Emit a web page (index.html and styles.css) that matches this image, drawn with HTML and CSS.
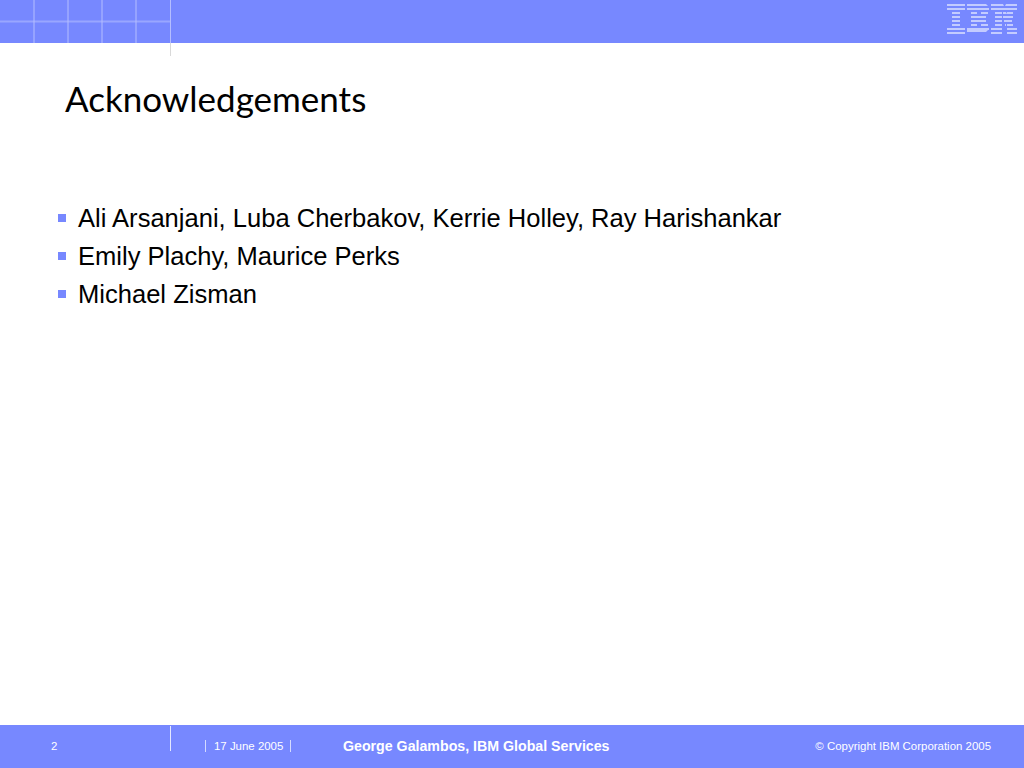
FILE: index.html
```html
<!DOCTYPE html>
<html lang="en">
<head>
<meta charset="utf-8">
<title>Acknowledgements</title>
<link rel="stylesheet" href="styles.css">
</head>
<body>
<div class="slide">
  <header class="top">
    <svg class="grid" width="172" height="56" viewBox="0 0 172 56">
      <path class="soft" d="M0 21.5H171"/>
      <path class="line" d="M34 0V43M68 0V43M102 0V43M136 0V43M170.5 0V43"/>
      <path class="tail" d="M170.5 43V56"/>
    </svg>
    <svg class="logo" width="72" height="34" viewBox="0 0 72 34">
      <path d="M1 3h18v2H1zM1 7h18v2H1zM6 11h8v2H6zM6 15h8v2H6zM6 19h8v2H6zM6 23h8v2H6zM1 27h18v2H1zM1 31h18v2H1z"/>
      <path d="M21 3h19l2 2H21zM21 7h22v2H21zM25 11h6v2h-6zM35 11h7v2h-7zM25 15h15v2H25zM25 19h15v2H25zM25 23h6v2h-6zM35 23h7v2h-7zM21 27h22v2H21zM21 31h19l2-2H21z"/>
      <path d="M45 3h12l1 2H45zM60 3h11v2H59zM45 7h14l1 2H45zM59 7h12v2H60zM49 11h7v2h-7zM57 11h3l1 2h-4zM61 11h6v2h-6zM49 15h7v2h-7zM57 15h10v2H57zM49 19h7v2h-7zM58 19h8v2h-8zM61 23h6v2h-6zM49 23h7v2h-7zM45 27h11v2H45zM59 23h1v2h-1zM61 27h10v2H61zM45 31h11v2H45zM61 31h10v2H61z"/>
    </svg>
  </header>
  <main class="content">
    <h1 class="title">Acknowledgements</h1>
    <ul class="items">
      <li class="item">Ali Arsanjani, Luba Cherbakov, Kerrie Holley, Ray Harishankar</li>
      <li class="item">Emily Plachy, Maurice Perks</li>
      <li class="item">Michael Zisman</li>
    </ul>
  </main>
  <footer class="bottom">
    <span class="page">2</span>
    <span class="divider"></span>
    <span class="date"><i class="bar"></i>17 June 2005<i class="bar"></i></span>
    <span class="author">George Galambos, IBM Global Services</span>
    <span class="copy">© Copyright IBM Corporation 2005</span>
  </footer>
</div>
</body>
</html>
```
FILE: styles.css
```css
html, body { margin: 0; padding: 0; background: #fff; }
.slide {
  width: 1024px;
  height: 768px;
  display: flex;
  flex-direction: column;
  position: relative;
  overflow: hidden;
  font-family: "Liberation Sans", Arial, sans-serif;
}
.top {
  height: 43px;
  flex: none;
  background: #7788ff;
  display: flex;
  justify-content: flex-end;
  align-items: flex-start;
}
.grid { position: absolute; left: 0; top: 0; }
.grid path { fill: none; }
.soft { stroke: #99a6ff; stroke-width: 2; }
.line { stroke: #b5beff; stroke-width: 1; }
.tail { stroke: #d9d9d9; stroke-width: 1; }
.logo { margin: 1px 6px 0 0; fill: #c3cbff; }
.content { flex: 1; padding: 0 0 0 58px; }
.title {
  margin: 34px 0 0 7px;
  font-family: Lato, "DejaVu Sans", sans-serif;
  font-size: 35px;
  line-height: 42px;
  font-weight: 400;
  color: #000;
}
.items { list-style: none; margin: 80px 0 0; padding: 0; }
.item {
  position: relative;
  padding-left: 20px;
  font-size: 25.55px;
  line-height: 38px;
  color: #000;
}
.item::before {
  content: "";
  position: absolute;
  left: 0;
  top: 15px;
  width: 8px;
  height: 8px;
  background: #7788ff;
}
.bottom {
  height: 43px;
  flex: none;
  background: #7788ff;
  color: #fff;
  display: flex;
  align-items: center;
  position: relative;
  font-size: 11.45px;
  padding-bottom: 2px;
  box-sizing: border-box;
}
.page { margin-left: 51px; width: 119px; }
.divider {
  position: absolute;
  left: 170px;
  top: 1px;
  width: 1px;
  height: 25px;
  background: #e4e8ff;
}
.date { margin-left: 35px; display: flex; align-items: center; width: 138px; }
.bar { display: inline-block; width: 1px; height: 12px; background: #d4daff; margin: 0 8px 0 0; }
.bar:last-child { margin: 0 0 0 7px; }
.author { font-weight: 700; font-size: 14.2px; }
.copy { position: absolute; right: 33px; }
```
